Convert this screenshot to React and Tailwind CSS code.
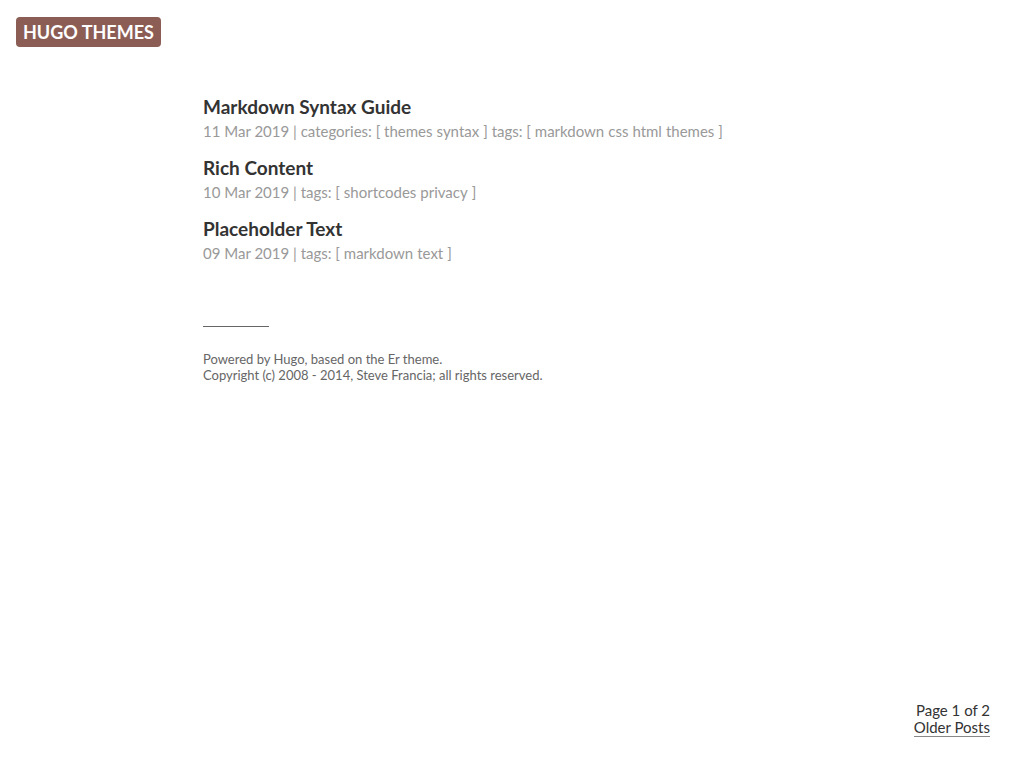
import React from "react";

const posts = [
  {
    title: "Markdown Syntax Guide",
    date: "11 Mar 2019",
    categories: ["themes", "syntax"],
    tags: ["markdown", "css", "html", "themes"],
  },
  {
    title: "Rich Content",
    date: "10 Mar 2019",
    tags: ["shortcodes", "privacy"],
  },
  {
    title: "Placeholder Text",
    date: "09 Mar 2019",
    tags: ["markdown", "text"],
  },
];

const Post = ({ post }) => (
  <article className="mb-[13px]">
    <h2 className="text-[19px] leading-[26px] font-bold text-[#333]">
      <a href="#">{post.title}</a>
    </h2>
    <div className="text-[15px] leading-[22px] text-[#999]">
      {post.date} |{" "}
      {post.categories && (
        <>
          categories: [{" "}
          {post.categories.map((c) => (
            <a key={c} href="#" className="mr-[4px]">
              {c}
            </a>
          ))}
          ]{" "}
        </>
      )}
      tags: [{" "}
      {post.tags.map((t) => (
        <a key={t} href="#" className="mr-[4px]">
          {t}
        </a>
      ))}
      ]
    </div>
  </article>
);

export default function App() {
  return (
    <div
      className="min-h-[768px] bg-white relative"
      style={{ fontFamily: "Lato, 'Liberation Sans', sans-serif" }}
    >
      <header className="px-4 pt-[17px]">
        <a
          href="#"
          className="inline-block bg-[#8b5d55] text-white font-bold text-[18px] leading-[30px] px-[7px] rounded-[4px]"
        >
          HUGO THEMES
        </a>
      </header>

      <main className="pl-[203px] pt-[47px]">
        {posts.map((p) => (
          <Post key={p.title} post={p} />
        ))}

        <div className="mt-[62px] w-[66px] border-t border-[#666]" />
        <footer className="mt-[24px] text-[13px] leading-[16px] text-[#666]">
          <p>Powered by Hugo, based on the Er theme.</p>
          <p>Copyright (c) 2008 - 2014, Steve Francia; all rights reserved.</p>
        </footer>
      </main>

      <nav className="absolute right-[34px] bottom-[32px] text-right text-[15px] leading-[17px] text-[#333]">
        <div>Page 1 of 2</div>
        <a href="#" className="border-b border-[#888]">
          Older Posts
        </a>
      </nav>
    </div>
  );
}
